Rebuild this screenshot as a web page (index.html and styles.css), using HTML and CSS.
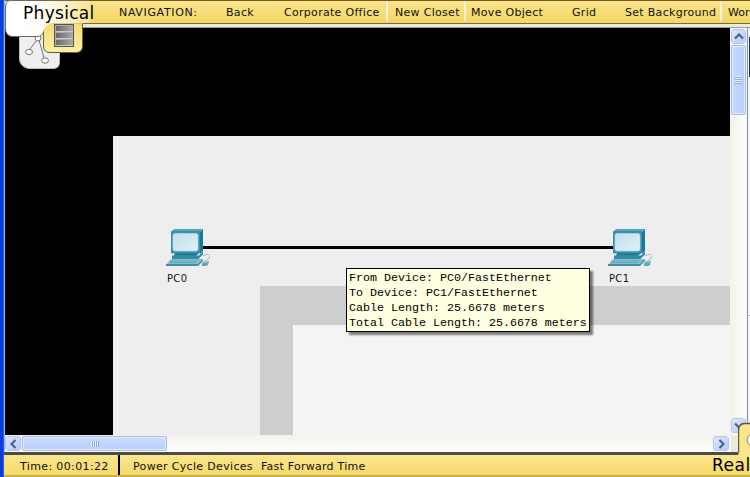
FILE: index.html
```
<!DOCTYPE html>
<html lang="en">
<head>
<meta charset="utf-8">
<title>Physical Workspace</title>
<link rel="stylesheet" href="styles.css">
</head>
<body>
<svg width="0" height="0" class="defs" aria-hidden="true">
  <defs>
    <linearGradient id="screen" x1="0" y1="0" x2="1" y2="1"><stop offset="0" stop-color="#c3dfeb"/><stop offset="1" stop-color="#e0f0f5"/></linearGradient>
    <linearGradient id="metal" x1="0" y1="0" x2="1" y2="0"><stop offset="0" stop-color="#66686c"/><stop offset="1" stop-color="#a8a8a8"/></linearGradient>
    <linearGradient id="whitetab" gradientUnits="userSpaceOnUse" x1="20" y1="10" x2="100" y2="10"><stop offset="0" stop-color="#fff"/><stop offset=".3" stop-color="#fffdf4"/><stop offset="1" stop-color="#f8de7e"/></linearGradient>
    <linearGradient id="yellowtab" x1="0" y1="0" x2="0" y2="1"><stop offset="0" stop-color="#f5dc70"/><stop offset="1" stop-color="#fff0a4"/></linearGradient>
    <symbol id="pc" viewBox="0 0 46 40">
      <path d="M5 3l3-3h29l-3 3z" fill="#56a6bc"/>
      <path d="M34 3l3-3v22l-3 3z" fill="#187a94"/>
      <rect x="5" y="2" width="29" height="22.5" rx="1" fill="#398fa9"/>
      <rect x="7" y="4.5" width="25" height="17.5" rx="2" fill="url(#screen)" stroke="#b4dce8" stroke-width=".7"/>
      <path d="M9 24h24l-3 3H8z" fill="#217e98"/>
      <path d="M6 26.500h27l4-4v3l-5 5H6z" fill="#328ca5"/>
      <path d="M4 31l2-1h31l-5 6H0z" fill="#87bdcc"/>
      <path d="M0 35h32l5-5v2l-5 5H0z" fill="#3b90a8"/>
      <path d="M4 32h27M3 33.6h26" stroke="#5ba2b6" stroke-width=".8"/>
      <path d="M37 27c4-3 8-1 6 2-1 2-3 1-3 3" fill="none" stroke="#a9b5b8"/>
      <path d="M36 35l2-3h5l-1 4-2 1h-4z" fill="#5fa4b8"/>
      <path d="M38 33h4" stroke="#b9dce6"/>
    </symbol>
  </defs>
</svg>
<div class="app">
  <nav class="nav">
    <span class="c-nav">NAVIGATION:</span>
    <span class="c-back">Back</span>
    <span class="c-corp sep">Corporate Office</span>
    <span class="c-closet sep">New Closet</span>
    <span class="c-move">Move Object</span>
    <span class="c-grid">Grid</span>
    <span class="c-bg sep">Set Background</span>
    <span class="c-work">Wor</span>
  </nav>
  <div class="gutter"></div>
  <div class="middle">
    <div class="canvas">
      <div class="city">
        <div class="wall"><div class="room"></div></div>
      </div>
      <div class="cable"></div>
      <div class="device pc0"><svg><use href="#pc"/></svg><span>PC0</span></div>
      <div class="device pc1"><svg><use href="#pc"/></svg><span>PC1</span></div>
      <div class="tip"><p>From Device: PC0/FastEthernet</p><p>To Device: PC1/FastEthernet</p><p>Cable Length: 25.6678 meters</p><p>Total Cable Length: 25.6678 meters</p></div>
    </div>
    <div class="vscroll">
      <div class="btn up"><svg width="10" height="7" viewBox="0 0 10 7"><path d="M1 5.5l4-4 4 4"/></svg></div>
      <div class="thumb"><i></i><i></i><i></i><i></i></div>
      <div class="btn down"><svg width="10" height="7" viewBox="0 0 10 7"><path d="M1 1.5l4 4 4-4"/></svg></div>
    </div>
    <div class="edge"><div class="dark"></div><div class="grey"></div></div>
  </div>
  <div class="hscroll">
    <div class="btn"><svg width="7" height="10" viewBox="0 0 7 10"><path d="M5.5 1l-4 4 4 4"/></svg></div>
    <div class="thumb"><i></i><i></i><i></i><i></i></div>
    <div class="btn right"><svg width="7" height="10" viewBox="0 0 7 10"><path d="M1.5 1l4 4-4 4"/></svg></div>
  </div>
  <footer class="footer">
    <span class="time">Time: 00:01:22</span>
    <span class="power">Power Cycle Devices</span>
    <span class="fast">Fast Forward Time</span>
    <span class="real">Real</span>
  </footer>
</div>
<svg class="tabs" width="90" height="72" viewBox="0 0 90 72">
  <path d="M19.500 30H59.500V62Q59.500 68.500 53 68.500H28Q19.500 66 19.500 59z" fill="#efefef" stroke="#bbb"/>
  <g fill="#f8f8f8" stroke="#777"><path d="M37 40L30 49M39 40l5 18"/><circle cx="38" cy="38" r="3"/><ellipse cx="29" cy="52" rx="3.5" ry="2.7"/><ellipse cx="45" cy="60.500" rx="3.500" ry="2.700"/></g>
  <path d="M43.500 23H82.500V46Q82.500 52.500 76 52.500H50Q43.500 52.500 43.500 46z" fill="url(#yellowtab)" stroke="#6b5e28"/>
  <path d="M5.500 0H90V23.500H52Q45 24 43.500 31Q42 36.500 37 36.500H13Q5.500 36.500 5.500 28V8Q5.500 1 10 0z" fill="url(#whitetab)"/>
  <path d="M43.500 32Q42 36.500 37 36.500H13Q5.500 36.500 5.500 28V8Q5.500 1 10 .5H90" fill="none" stroke="#6e6a5b"/>
  <path d="M83 23.500h7" stroke="#806a25"/>
  <rect x="54.500" y="24.500" width="19" height="22" fill="#aaa" stroke="#555"/>
  <path d="M56 26h16v5H56zM56 33h16v5H56zM56 40h16v5H56z" fill="url(#metal)"/>
  <path d="M56 31.500h17M56 38.500h17M56 45.500h17" stroke="#ccc"/>
</svg>
<span class="title">Physical</span>
<svg class="realtab" width="12" height="34" viewBox="0 0 12 34"><path d="M.5 31V9Q.5 1.500 7 1.500H12V34H.5z" fill="#fbe789"/><path d="M.5 30V9Q.5 1.500 7 1.500H12" fill="none" stroke="#5d583f" stroke-width="1.400"/><circle cx="15" cy="18" r="6" fill="#eee" stroke="#888"/></svg>
</body>
</html>
```
FILE: styles.css
```
* { box-sizing: border-box; }
body { margin: 0; width: 750px; height: 477px; overflow: hidden; position: relative; color: #111; font: 11px/14px "DejaVu Sans", sans-serif; letter-spacing: .3px; white-space: nowrap; background: #eee; }
.defs { position: absolute; }
.app { height: 477px; padding-left: 5px; background: linear-gradient(90deg, #0b3ed6 0 3px, #285ff0 3px 4px, #8fb4f4 4px 5px, #edeae0 5px); display: flex; flex-direction: column; }
.nav { height: 24px; flex: none; display: grid; grid-template-columns: 107px 58px 104px 78px 106px 53px 97px 28px; padding-left: 114px; background: linear-gradient(#fae48c, #f4d666); border-top: 1px solid #6f5a20; border-bottom: 1px solid #806a25; overflow: hidden; }
.nav span { height: 20px; line-height: 23px; }
.nav .c-nav { letter-spacing: .65px; }
.sep { border-right: 2px solid #f5f1df; }
.c-closet { padding-left: 7px; }
.c-move { padding-left: 5px; }
.nav .c-work { padding-left: 6px; letter-spacing: 0; }
.gutter { height: 4px; flex: none; background: linear-gradient(#eee9d8 0 3px, #8aa0b0 3px); }
.middle { height: 407px; flex: none; display: flex; }
.canvas { width: 725px; height: 407px; background: #000; position: relative; overflow: hidden; padding: 108px 0 0 108px; }
.city { height: 299px; background: #eee; padding: 150px 0 0 147px; }
.wall { height: 149px; background: #cecece; padding: 39px 0 0 33px; }
.room { height: 110px; background: #f4f4f4; border-left: 2px solid #f8f8f8; }
.cable { position: absolute; left: 198px; top: 218px; width: 412px; height: 3px; background: #000; }
.device { position: absolute; top: 201px; width: 46px; }
.device svg { display: block; width: 46px; height: 40px; }
.device span { display: block; margin: 3px 0 0 1px; font-family: "DejaVu Sans Condensed", "DejaVu Sans", sans-serif; font-size: 11px; letter-spacing: .4px; }
.pc0 { left: 161px; }
.pc1 { left: 603px; }
.tip { position: absolute; left: 341px; top: 240px; width: 244px; height: 64px; border: 1px solid #000; background: #ffffe1; box-shadow: 3px 3px 2px rgba(0,0,0,.5); padding: 2px 2px 0; font: 11.667px/15px "Liberation Mono", monospace; letter-spacing: 0; color: #000; }
.tip p { margin: 0; }
.vscroll { width: 17px; background: linear-gradient(90deg, #f2f1eb, #fefefb); border-right: 1px solid #eef1f5; display: flex; flex-direction: column; padding-left: 1px; }
.btn { width: 15px; height: 15px; flex: none; border: 1px solid #fff; outline: 1px solid #b3c6ee; outline-offset: -1px; border-radius: 3px; background: linear-gradient(135deg, #dce7ff, #b5c9fa); display: flex; align-items: center; justify-content: center; }
.btn path { fill: none; stroke: #4d6185; stroke-width: 2.2; }
.vscroll .btn { margin-top: 1px; }
.vscroll .down { margin: auto 0 2px; }
.thumb { display: flex; align-items: center; justify-content: center; gap: 1px; border: 1px solid #a5bbe8; box-shadow: inset 0 0 0 1px #e2ebff; border-radius: 2px; background: linear-gradient(90deg, #c9d8ff, #b9ccfb); }
.vscroll .thumb { width: 15px; height: 70px; margin-top: 1px; flex-direction: column; gap: 0; }
.vscroll .thumb i { background: linear-gradient(#eef4ff 50%, #8da8de 50%); width: 7px; height: 2px; }
.edge { width: 3px; border-left: 1px solid #8197ac; background: #f4f4f1; padding: 9px 0 0 1px; }
.dark { height: 40px; background: #19385e; }
.grey { height: 239px; border-bottom: 1px solid #8c9aa6; }
.hscroll { height: 17px; flex: none; width: 726px; background: linear-gradient(#f3f2ec, #fefefb); display: flex; padding-top: 1px; }
.hscroll .btn { width: 16px; }
.hscroll .thumb { width: 145px; height: 15px; margin-left: 1px; gap: 0; background: linear-gradient(#cddbff, #b9ccfb); }
.hscroll .thumb i { width: 2px; height: 6px; background: linear-gradient(90deg, #eef4ff 50%, #8da8de 50%); }
.hscroll .right { margin-left: auto; margin-right: 2px; }
.footer { flex: 1; margin-left: -1px; display: flex; background: linear-gradient(#fbe68f, #f5d96a 90%, #ccb147 90%); border-top: 3px solid #4d4c43; line-height: 23px; overflow: hidden; }
.footer span { flex: none; }
.time { width: 116px; height: 20px; padding-left: 16px; border-right: 2px solid #000; letter-spacing: .37px; }
.power { width: 141px; padding-left: 13px; letter-spacing: .33px; }
.fast { width: 451px; letter-spacing: .25px; }
.real { font-size: 17px; line-height: 20px; color: #000; letter-spacing: .5px; }
.tabs { position: absolute; left: 0; top: 0; }
.title { position: absolute; left: 23px; top: 2px; font-size: 17px; line-height: 22px; color: #000; letter-spacing: .3px; }
.realtab { position: absolute; left: 738px; top: 422px; }
```
